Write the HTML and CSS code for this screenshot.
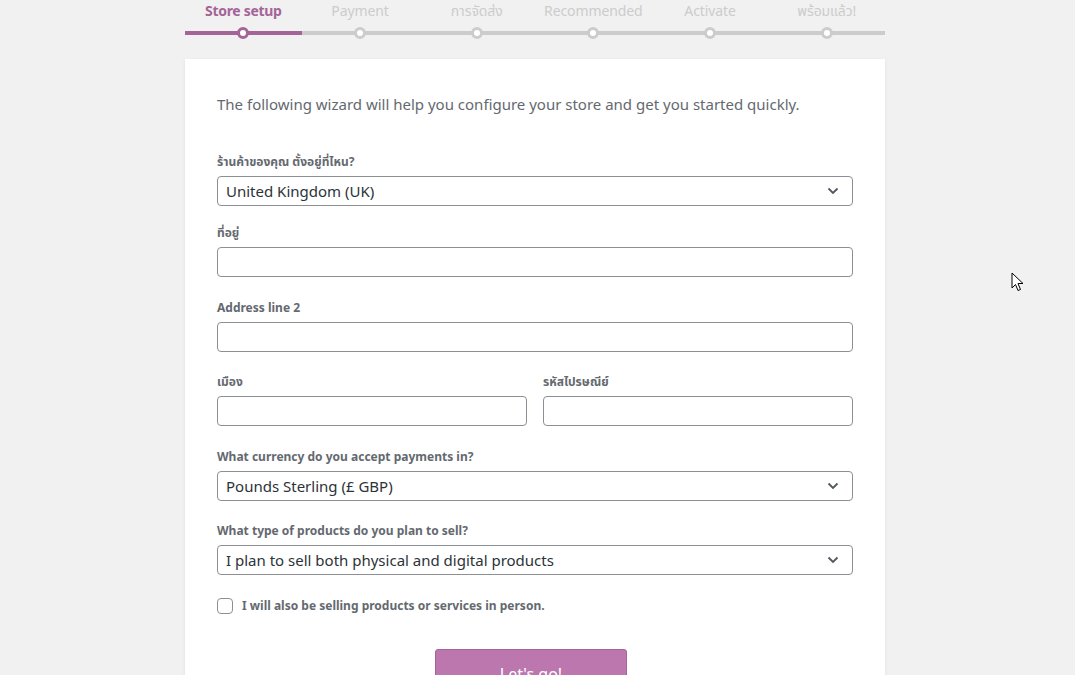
FILE: index.html
```html
<!DOCTYPE html>
<html>
<head>
<meta charset="utf-8">
<link rel="stylesheet" href="styles.css">
</head>
<body>
<div class="page">
  <ol class="steps">
    <li class="step done active"><span class="step-label">Store setup</span><span class="dot"></span></li>
    <li class="step"><span class="step-label">Payment</span><span class="dot"></span></li>
    <li class="step"><span class="step-label">การจัดส่ง</span><span class="dot"></span></li>
    <li class="step"><span class="step-label">Recommended</span><span class="dot"></span></li>
    <li class="step"><span class="step-label">Activate</span><span class="dot"></span></li>
    <li class="step"><span class="step-label">พร้อมแล้ว!</span><span class="dot"></span></li>
  </ol>

  <div class="card">
    <p class="intro">The following wizard will help you configure your store and get you started quickly.</p>

    <div class="field field-first">
      <label class="label">ร้านค้าของคุณ ตั้งอยู่ที่ไหน?</label>
      <div class="select"><span>United Kingdom (UK)</span><svg class="chev" width="12" height="8" viewBox="0 0 12 8"><path d="M1.5 1.5 L6 6 L10.5 1.5" fill="none" stroke="#50575e" stroke-width="1.8"/></svg></div>
    </div>

    <div class="field">
      <label class="label">ที่อยู่</label>
      <div class="input"></div>
    </div>

    <div class="field">
      <label class="label">Address line 2</label>
      <div class="input"></div>
    </div>

    <div class="field-row">
      <div class="field">
        <label class="label">เมือง</label>
        <div class="input"></div>
      </div>
      <div class="field">
        <label class="label">รหัสไปรษณีย์</label>
        <div class="input"></div>
      </div>
    </div>

    <div class="field">
      <label class="label">What currency do you accept payments in?</label>
      <div class="select"><span>Pounds Sterling (£ GBP)</span><svg class="chev" width="12" height="8" viewBox="0 0 12 8"><path d="M1.5 1.5 L6 6 L10.5 1.5" fill="none" stroke="#50575e" stroke-width="1.8"/></svg></div>
    </div>

    <div class="field">
      <label class="label">What type of products do you plan to sell?</label>
      <div class="select"><span>I plan to sell both physical and digital products</span><svg class="chev" width="12" height="8" viewBox="0 0 12 8"><path d="M1.5 1.5 L6 6 L10.5 1.5" fill="none" stroke="#50575e" stroke-width="1.8"/></svg></div>
    </div>

    <div class="check-row">
      <span class="checkbox"></span>
      <span class="check-label">I will also be selling products or services in person.</span>
    </div>

    <div class="actions">
      <button class="btn">Let's go!</button>
    </div>
  </div>
</div>
<svg class="cursor" width="14" height="21" viewBox="0 0 14 21"><path d="M1 1 L1 16 L4.5 12.5 L7 18.5 L9.5 17.5 L7 11.5 L12 11.5 Z" fill="#fff" stroke="#000" stroke-width="1" stroke-linejoin="miter"/></svg>
</body>
</html>
```

FILE: styles.css
```css
* { box-sizing: border-box; }
html, body {
  margin: 0;
  padding: 0;
  background: #f1f1f1;
  height: 675px;
  overflow: hidden;
}
body {
  font-family: "Segoe UI", "Noto Sans", "Noto Sans Thai", sans-serif;
  color: #50575e;
  position: relative;
  padding-right: 5px;
}
.page {
  width: 700px;
  margin: 0 auto;
}
.steps {
  list-style: none;
  margin: 0;
  padding: 0;
  display: flex;
}
.step {
  flex: 1;
  display: flex;
  flex-direction: column;
  align-items: center;
  border-bottom: 4px solid #ccc;
  height: 35px;
  position: relative;
}
.step.done { border-bottom-color: #a46497; }
.step-label {
  font-size: 14px;
  line-height: 22px;
  color: #ccc;
  white-space: nowrap;
  letter-spacing: -0.1px;
}
.step.active .step-label {
  color: #a46497;
  font-weight: 700;
  letter-spacing: -0.3px;
}
.dot {
  position: absolute;
  bottom: -8px;
  left: 50%;
  margin-left: -6px;
  width: 12px;
  height: 12px;
  border-radius: 50%;
  background: #fff;
  border: 3px solid #ccc;
}
.step.active .dot { border-color: #a46497; }

.card {
  margin-top: 24px;
  background: #fff;
  padding: 32px 32px 40px;
  box-shadow: 0 1px 3px rgba(0,0,0,0.08);
}
.intro {
  margin: 0 0 37px;
  font-size: 15px;
  line-height: 26px;
  color: #646970;
}
.field { margin-bottom: 22.5px; }
.field-first { margin-bottom: 19px; }
.field-row {
  display: flex;
  gap: 16px;
}
.field-row .field { flex: 1; }
.label {
  display: block;
  font-size: 12px;
  font-weight: 700;
  line-height: 16px;
  height: 16px;
  margin-bottom: 6px;
  color: #646970;
}
.input, .select {
  height: 30px;
  border: 1px solid #8c8f94;
  border-radius: 4px;
  background: #fff;
}
.select {
  display: flex;
  align-items: center;
  justify-content: space-between;
  padding: 0 13px 0 8px;
  font-size: 15px;
  color: #2c3338;
}
.chev { display: block; }
.check-row {
  display: flex;
  align-items: center;
  gap: 9px;
  margin-top: -0.5px;
}
.checkbox {
  width: 16px;
  height: 16px;
  border: 1px solid #8c8f94;
  border-radius: 4px;
  background: #fff;
}
.check-label {
  font-size: 12px;
  font-weight: 700;
  color: #646970;
}
.actions {
  display: flex;
  justify-content: center;
  margin-top: 35px;
  padding-right: 8px;
}
.btn {
  width: 192px;
  height: 50px;
  background: #bb77ae;
  border: 1px solid #a36597;
  border-radius: 3px;
  color: #fff;
  font-family: inherit;
  font-size: 16px;
  padding: 0;
}
.cursor {
  position: absolute;
  left: 1011px;
  top: 272px;
}
```
